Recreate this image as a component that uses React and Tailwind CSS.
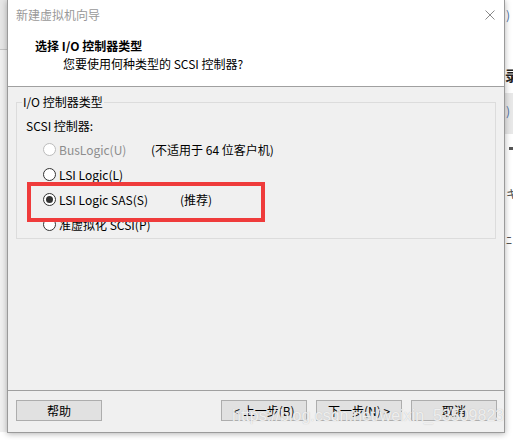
import React from 'react';

const cjk = "font-['Noto_Sans_CJK_SC','Noto_Sans',sans-serif]";

function Radio({ checked, disabled }) {
  return (
    <span
      className={`flex h-[13px] w-[13px] shrink-0 items-center justify-center rounded-full border bg-white ${
        disabled ? 'border-[#bcbcbc]' : 'border-[#333333]'
      }`}
    >
      {checked && <span className="h-[7px] w-[7px] rounded-full bg-[#333333]" />}
    </span>
  );
}

function Option({ label, note, checked, disabled, labelWidth }) {
  return (
    <div className="flex h-[25px] items-center pl-[26px]">
      <Radio checked={checked} disabled={disabled} />
      <span
        className={`ml-[3px] leading-[16px] ${disabled ? 'text-[#8d8d8d]' : 'text-black'} ${labelWidth || ''}`}
      >
        {label}
      </span>
      {note && <span className="leading-[16px] text-black">{note}</span>}
    </div>
  );
}

function Button({ children }) {
  return (
    <button className="flex h-[21px] w-[86px] items-center justify-center border border-[#adadad] bg-[#e1e1e1] text-[12px] leading-[16px] text-black">
      {children}
    </button>
  );
}

export default function App() {
  return (
    <div className={`relative flex h-[440px] w-[513px] overflow-hidden bg-white text-[12px] ${cjk}`}>
      {/* background window, left side */}
      <div className="flex w-[7px] flex-col">
        <div className="h-[49px] bg-[#e6e6e6]" />
        <div className="h-px bg-[#c4c4c4]" />
        <div className="h-[382px] bg-[#f0f0f0]" />
        <div className="flex-1 bg-white" />
      </div>

      {/* wizard dialog */}
      <div className="relative z-10 flex h-[433px] w-[498px] flex-col border-x border-b border-[#9a9a9a] bg-[#f0f0f0] shadow-[0_1px_6px_rgba(0,0,0,0.3)]">
        <div className="flex h-[30px] items-center justify-between bg-white pl-[8px] pr-[9px]">
          <span className="leading-[16px] text-[#999999]">新建虚拟机向导</span>
          <svg width="10" height="10" viewBox="0 0 10 10">
            <path d="M0.5 0.5 L9.5 9.5 M9.5 0.5 L0.5 9.5" stroke="#8a8a8a" strokeWidth="1" />
          </svg>
        </div>

        <div className="h-[57px] border-b border-[#a0a0a0] bg-white pt-[8px]">
          <div className="pl-[27px] font-bold leading-[16px] text-black">选择 I/O 控制器类型</div>
          <div className="mt-[2px] pl-[55px] leading-[16px] text-black">您要使用何种类型的 SCSI 控制器?</div>
        </div>

        <div className="h-[304px] border-b border-[#a0a0a0] pt-[8px]">
          <fieldset className="ml-[8px] w-[480px] border border-[#dcdcdc] pb-[1px]">
            <legend className="ml-[5px] px-[1px] leading-[14px] text-black">I/O 控制器类型</legend>
            <p className="ml-[9px] mt-[9px] leading-[16px] text-black">SCSI 控制器:</p>
            <div className="mt-[3px]">
              <Option label="BusLogic(U)" note="(不适用于 64 位客户机)" disabled labelWidth="w-[92px]" />
              <Option label="LSI Logic(L)" />
              <Option label="LSI Logic SAS(S)" note="(推荐)" checked labelWidth="w-[121px]" />
              <Option label="准虚拟化 SCSI(P)" />
            </div>
          </fieldset>
        </div>

        <div className="flex flex-1 items-start justify-between pl-[8px] pr-[7px] pt-[9px]">
          <Button>帮助</Button>
          <div className="flex gap-[9px]">
            <Button>&lt; 上一步(B)</Button>
            <Button>下一步(N) &gt;</Button>
            <Button>取消</Button>
          </div>
        </div>
      </div>

      {/* background window, right side */}
      <div className="relative flex-1 overflow-hidden bg-white">
        <span className="absolute left-[1px] top-[7px] leading-[16px] text-[#4a6fa5]">)</span>
        <span className="absolute left-0 top-[66px] text-[14px] font-bold leading-[18px] text-[#222222]">录</span>
        <div className="absolute left-0 top-[93px] h-[41px] w-full bg-[#e8e8e8]" />
        <span className="absolute left-[1px] top-[103px] leading-[16px] text-[#4a6fa5]">)</span>
        <div className="absolute left-[4px] top-[147px] h-[3px] w-[6px] bg-[#555555]" />
        <span className="absolute left-[1px] top-[186px] leading-[16px] text-[#555555]">キ</span>
        <span className="absolute left-[1px] top-[232px] leading-[16px] text-[#555555]">ﾆ</span>
      </div>

      {/* annotation */}
      <div className="absolute left-[27px] top-[182px] z-20 h-[40px] w-[238px] border-4 border-[#ef3b3b]" />

      {/* watermark */}
      <div className="absolute left-[232px] top-[407px] z-20 font-['Liberation_Sans',sans-serif] text-[16px] leading-[18px] text-white/75 [text-shadow:0_0_1px_#b8b8b8]">
        https://blog.csdn.net/weixin_53509823
      </div>
    </div>
  );
}
